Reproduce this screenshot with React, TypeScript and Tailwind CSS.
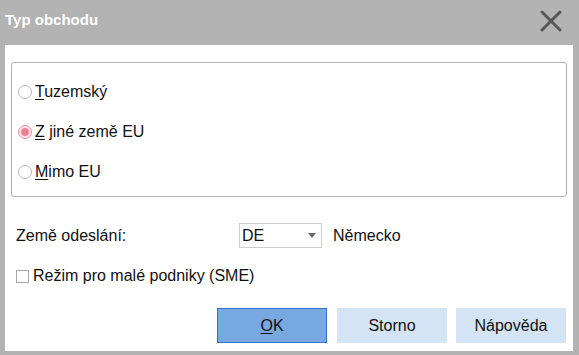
import { useState } from "react";

const options = [
  { key: "T", rest: "uzemský", id: "tuz" },
  { key: "Z", rest: " jiné země EU", id: "eu" },
  { key: "M", rest: "imo EU", id: "mimo" },
];

function Radio({ checked }: { checked: boolean }) {
  return checked ? (
    <span className="w-[14px] h-[14px] rounded-full border border-[#ef8a9b] bg-[#fde9ed] flex items-center justify-center shrink-0">
      <span className="w-[8px] h-[8px] rounded-full bg-[#f27d93]" />
    </span>
  ) : (
    <span className="w-[14px] h-[14px] rounded-full border border-[#b5b5b5] bg-white shrink-0" />
  );
}

export default function App() {
  const [selected, setSelected] = useState("eu");
  const [sme, setSme] = useState(false);

  return (
    <div
      className="w-[579px] h-[355px] bg-[#b3b3b3] flex flex-col text-[16px] text-[#111]"
      style={{ fontFamily: '"Liberation Sans", Arial, sans-serif' }}
    >
      {/* title bar */}
      <div className="h-[45px] flex items-center justify-between pl-[5px] pr-[17px] shrink-0">
        <span className="text-white font-bold text-[15px] pb-[5px]">Typ obchodu</span>
        <svg width="22" height="22" viewBox="0 0 22 22" className="mb-[4px]">
          <path d="M2 2 L20 20 M20 2 L2 20" stroke="#575757" strokeWidth="3" strokeLinecap="round" />
        </svg>
      </div>

      <div className="flex-1 bg-white ml-[5px] mr-[6px] mb-[4px] flex flex-col">
        {/* group box */}
        <div className="mx-[6px] mt-[17px] h-[135px] border border-[#b0b0b0] rounded-[3px] pt-[9px] pl-[6px] flex flex-col">
          {options.map((o) => (
            <div
              key={o.id}
              className="h-[40px] flex items-center gap-[3px] cursor-default"
              onClick={() => setSelected(o.id)}
            >
              <Radio checked={selected === o.id} />
              <span>
                <span className="underline underline-offset-[2px]">{o.key}</span>
                {o.rest}
              </span>
            </div>
          ))}
        </div>

        {/* country row */}
        <div className="mt-[26px] h-[25px] flex items-center pl-[11px]">
          <span className="w-[223px]">Země odeslání:</span>
          <div className="w-[83px] h-[25px] border border-[#cfcfcf] flex items-center justify-between pl-[2px] pr-[5px]">
            <span>DE</span>
            <svg width="8" height="5" viewBox="0 0 8 5">
              <path d="M0 0 H8 L4 5 Z" fill="#666" />
            </svg>
          </div>
          <span className="ml-[11px]">Německo</span>
        </div>

        {/* checkbox row */}
        <div className="mt-[18px] h-[20px] flex items-center pl-[11px] gap-[4px]" onClick={() => setSme(!sme)}>
          <span className="w-[13px] h-[13px] border border-[#a8a8a8] bg-white shrink-0" />
          <span>Režim pro malé podniky (SME)</span>
        </div>

        {/* buttons */}
        <div className="mt-[22px] flex justify-end pr-[7px]">
          <button className="w-[110px] h-[35px] mr-[10px] bg-[#78a8e0] border border-[#2f74c8]">
            <span className="underline underline-offset-[2px]">O</span>K
          </button>
          <button className="w-[110px] h-[35px] mr-[9px] bg-[#d4e4f4]">Storno</button>
          <button className="w-[110px] h-[35px] bg-[#d4e4f4]">Nápověda</button>
        </div>
      </div>
    </div>
  );
}
